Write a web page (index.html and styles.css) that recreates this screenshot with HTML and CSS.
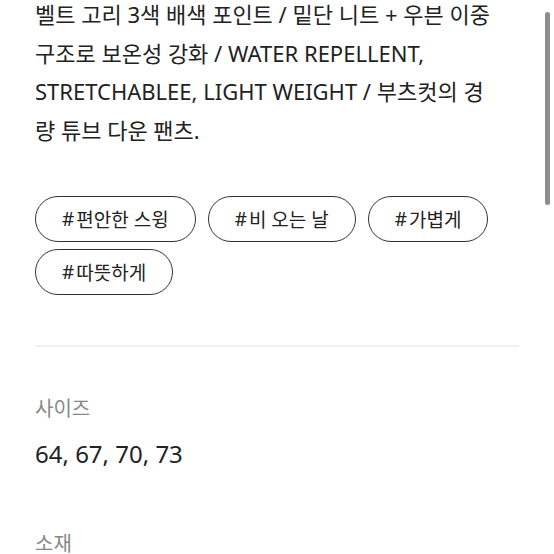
FILE: index.html
```html
<!DOCTYPE html>
<html lang="ko">
<head>
    <meta charset="UTF-8">
    <meta name="viewport" content="width=device-width, initial-scale=1.0">
    <title>상품 정보</title>
    <link rel="stylesheet" href="styles.css">
</head>
<body>
    <div class="page">
        <p class="desc">
            벨트 고리 3색 배색 포인트 / 밑단 니트 + 우븐 이중<br>
            구조로 보온성 강화 / WATER REPELLENT,<br>
            STRETCHABLEE, LIGHT WEIGHT / 부츠컷의 경<br>
            량 튜브 다운 팬츠.
        </p>
        <ul class="tags">
            <li class="tag"><span class="hash">#</span>편안한 스윙</li>
            <li class="tag"><span class="hash">#</span>비 오는 날</li>
            <li class="tag"><span class="hash">#</span>가볍게</li>
            <li class="tag"><span class="hash">#</span>따뜻하게</li>
        </ul>
        <hr class="divider">
        <div class="spec">
            <div class="spec-label">사이즈</div>
            <div class="spec-value">64, 67, 70, 73</div>
        </div>
        <div class="spec">
            <div class="spec-label">소재</div>
        </div>
    </div>
    <div class="scroll-thumb"></div>
</body>
</html>
```

FILE: styles.css
```css
body{
    margin: 0;
    background: #fff;
    color: #222;
    font-family: "Noto Sans", "Noto Sans CJK KR", sans-serif;
    height: 554px;
    overflow: hidden;
}
.page{
    padding: 0 35px;
}
/* 상품 설명 문단 */
.desc{
    margin: -5px 0 0;
    font-size: 22px;
    line-height: 38.5px;
}
/* 해시태그 */
.tags{
    list-style: none;
    margin: 47px 0 0;
    padding: 0;
    display: flex;
    flex-wrap: wrap;
    gap: 7px 12px;
}
.tag{
    display: flex;
    align-items: center;
    box-sizing: border-box;
    height: 46px;
    padding: 0 26px;
    border: 1.5px solid #333;
    border-radius: 23px;
    font-size: 19px;
    color: #222;
}
.hash{
    margin-right: 2px;
}
.divider{
    margin: 50px 0 0;
    border: 0;
    border-top: 2px solid #efefef;
}
/* 사이즈, 소재 */
.spec{
    margin-top: 49px;
}
.spec + .spec{
    margin-top: 62px;
}
.spec-label{
    font-size: 20px;
    line-height: 26px;
    color: #888;
}
.spec-value{
    margin-top: 17px;
    font-size: 24px;
    line-height: 30px;
    color: #222;
}
/* 오른쪽 스크롤바 */
.scroll-thumb{
    position: absolute;
    top: 12px;
    right: 4px;
    width: 5px;
    height: 193px;
    border-radius: 3px;
    background: #8c8c8c;
}
```
